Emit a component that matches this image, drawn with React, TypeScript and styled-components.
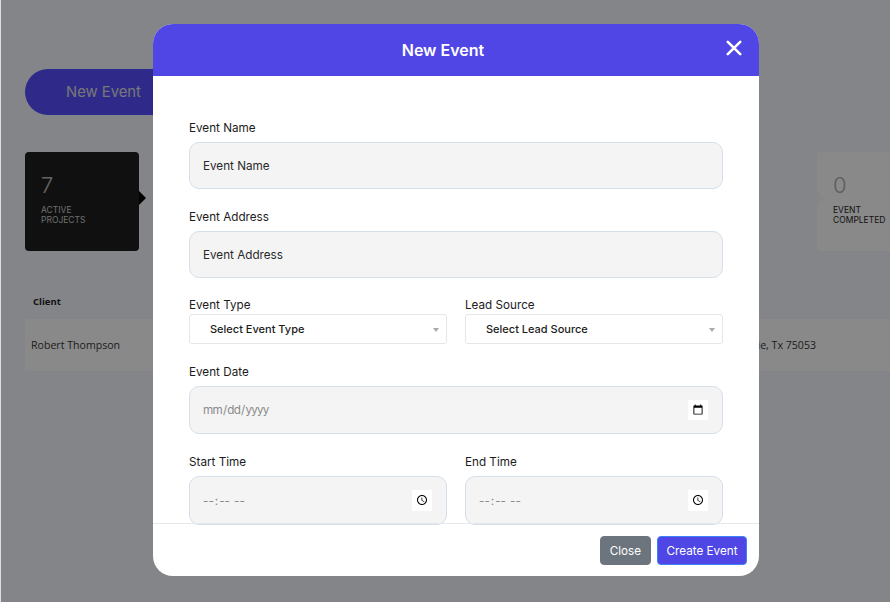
import React from "react";
import styled, { createGlobalStyle } from "styled-components";

const GlobalStyle = createGlobalStyle`
  html, body {
    margin: 0;
    height: 100%;
    overflow: hidden;
    background: #fff;
    font-family: Inter, "Liberation Sans", sans-serif;
  }
  * {
    box-sizing: border-box;
  }
`;

const Page = styled.div`
  width: 890px;
  height: 602px;
  padding: 69px 0 0 25px;
  background: #dcdee3;
  overflow: hidden;
`;

const NewEventButton = styled.button`
  display: block;
  width: 190px;
  height: 46px;
  padding: 0 0 0 41px;
  border: 0;
  border-radius: 23px;
  background: #4f46e5;
  color: #c8c8c8;
  font: 400 14.8px Inter, sans-serif;
  text-align: left;
`;

const CardRow = styled.div`
  display: flex;
  width: 906px;
  margin-top: 37px;
`;

const StatCard = styled.div<{ $dark?: boolean }>`
  position: relative;
  width: 114px;
  height: 99px;
  padding: 21px 15px 0 16px;
  border-radius: 4px;
  background: ${(p) => (p.$dark ? "#1c1c1c" : "#e4e4e4")};
  color: ${(p) => (p.$dark ? "#b8b8b8" : "#222")};
  margin-left: ${(p) => (p.$dark ? "0" : "auto")};
  &::after {
    content: "";
    position: absolute;
    top: 39px;
    border-top: 7px solid transparent;
    border-bottom: 7px solid transparent;
    ${(p) =>
      p.$dark
        ? "left: 100%; border-left: 7px solid #000;"
        : "left: 0; border-left: 7px solid #dedfe3;"}
  }
`;

const StatCount = styled.div<{ $dark?: boolean }>`
  font-size: 22px;
  font-weight: 300;
  line-height: 24px;
  color: ${(p) => (p.$dark ? "#a8a8a8" : "#999")};
`;

const StatLabel = styled.div`
  margin-top: 8px;
  font-size: 8.5px;
  line-height: 10px;
  text-transform: uppercase;
`;

const TableHead = styled.div`
  margin: 45px 0 0 8px;
  font: 700 9.5px "Open Sans", sans-serif;
  line-height: 12px;
  color: #222;
`;

const TableRow = styled.div`
  display: flex;
  justify-content: space-between;
  width: 865px;
  height: 52px;
  margin-top: 11px;
  padding: 18px 74px 0 6px;
  background: #e4e4e4;
  font: 400 10.6px "Open Sans", sans-serif;
  line-height: 16px;
  color: #333;
`;

const Backdrop = styled.div`
  position: fixed;
  inset: 0 0 0 1px;
  background: rgba(0, 0, 0, 0.4);
  padding: 24px 0 0 152px;
`;

const Modal = styled.div`
  width: 606px;
  height: 552px;
  background: #fff;
  border-radius: 20px;
  display: flex;
  flex-direction: column;
`;

const ModalHeader = styled.div`
  display: flex;
  align-items: center;
  justify-content: center;
  position: relative;
  height: 52px;
  flex: none;
  padding-right: 26px;
  background: #4f46e5;
  border-radius: 20px 20px 0 0;
  color: #fff;
  font-size: 16px;
  font-weight: 600;
`;

const CloseIcon = styled.button`
  position: absolute;
  right: 17px;
  top: 16px;
  width: 16px;
  height: 16px;
  padding: 0;
  border: 0;
  background: none;
  display: flex;
  svg {
    display: block;
  }
`;

const ModalBody = styled.div`
  flex: none;
  height: 447px;
  padding: 44px 36px 0;
`;

const Field = styled.div<{ $gap?: number }>`
  margin-bottom: ${(p) => p.$gap ?? 0}px;
`;

const Label = styled.label<{ $space?: number }>`
  display: block;
  height: 16px;
  margin-bottom: ${(p) => p.$space ?? 6}px;
  font-size: 11.7px;
  line-height: 16px;
  color: #1c1c1c;
`;

const TextInput = styled.input<{ $h?: number }>`
  display: block;
  width: 100%;
  height: ${(p) => p.$h ?? 47}px;
  padding: 0 13px;
  background: #f4f4f4;
  border: 1px solid #d5dfea;
  border-radius: 10px;
  outline: none;
  font: 400 11.7px Inter, sans-serif;
  color: #8a8a8a;
  &::placeholder {
    color: #2a2a2a;
    opacity: 1;
  }
  &[type="date"]::-webkit-datetime-edit {
    letter-spacing: -0.8px;
    margin-left: -1px;
  }
  &[type="time"]::-webkit-datetime-edit {
    letter-spacing: -0.2px;
    margin-left: -1px;
  }
  &::-webkit-calendar-picker-indicator {
    background-color: #fff;
    padding: 4px;
    margin-right: 1px;
    opacity: 1;
  }
`;

const TwoCols = styled.div<{ $top?: number }>`
  display: grid;
  grid-template-columns: 258px 258px;
  column-gap: 18px;
  margin-top: ${(p) => p.$top ?? 0}px;
`;

const DateField = styled.div`
  margin-top: 20px;
`;

const SelectBox = styled.div`
  position: relative;
  &::after {
    content: "";
    position: absolute;
    right: 8px;
    top: 14px;
    border-left: 3.5px solid transparent;
    border-right: 3.5px solid transparent;
    border-top: 4px solid #aaa;
  }
`;

const Select = styled.select`
  display: block;
  width: 100%;
  height: 30px;
  padding: 0 0 0 20px;
  appearance: none;
  background: #fff;
  border: 1px solid #e4e6ea;
  border-radius: 3px;
  outline: none;
  font: 500 11px Inter, sans-serif;
  color: #1c1c1c;
`;

const ModalFooter = styled.div`
  flex: none;
  display: flex;
  justify-content: flex-end;
  align-items: flex-start;
  gap: 6px;
  height: 53px;
  padding: 12px 12px 0;
  border-top: 1px solid #e5e7eb;
`;

const FooterButton = styled.button<{ $primary?: boolean }>`
  height: 29px;
  padding: 0 ${(p) => (p.$primary ? 8.5 : 9)}px;
  border: 1px solid ${(p) => (p.$primary ? "#3b82f6" : "#6c757d")};
  border-radius: 4px;
  background: ${(p) => (p.$primary ? "#4f46e5" : "#6c757d")};
  color: #fff;
  font: 400 11.7px Inter, sans-serif;
`;

export default function App() {
  return (
    <>
      <GlobalStyle />
      <Page>
        <NewEventButton>New Event</NewEventButton>
        <CardRow>
          <StatCard $dark>
            <StatCount $dark>7</StatCount>
            <StatLabel>Active<br />Projects</StatLabel>
          </StatCard>
          <StatCard>
            <StatCount>0</StatCount>
            <StatLabel>Event<br />Completed</StatLabel>
          </StatCard>
        </CardRow>
        <TableHead>Client</TableHead>
        <TableRow>
          <span>Robert Thompson</span>
          <span>Grand Prairie, Tx 75053</span>
        </TableRow>
      </Page>
      <Backdrop>
        <Modal>
          <ModalHeader>
            New Event
            <CloseIcon aria-label="Close">
              <svg width="16" height="16" viewBox="0 0 16 16">
                <path d="M1.8 1.8 14.2 14.2M14.2 1.8 1.8 14.2" stroke="#fff" strokeWidth="2.6" strokeLinecap="round" />
              </svg>
            </CloseIcon>
          </ModalHeader>
          <ModalBody>
            <Field $gap={20}>
              <Label>Event Name</Label>
              <TextInput placeholder="Event Name" />
            </Field>
            <Field $gap={19}>
              <Label>Event Address</Label>
              <TextInput placeholder="Event Address" />
            </Field>
            <TwoCols>
              <Field>
                <Label $space={1}>Event Type</Label>
                <SelectBox>
                  <Select>
                    <option>Select Event Type</option>
                  </Select>
                </SelectBox>
              </Field>
              <Field>
                <Label $space={1}>Lead Source</Label>
                <SelectBox>
                  <Select>
                    <option>Select Lead Source</option>
                  </Select>
                </SelectBox>
              </Field>
            </TwoCols>
            <DateField>
              <Label>Event Date</Label>
              <TextInput type="date" $h={48} />
            </DateField>
            <TwoCols $top={20}>
              <Field>
                <Label>Start Time</Label>
                <TextInput type="time" $h={49} />
              </Field>
              <Field>
                <Label>End Time</Label>
                <TextInput type="time" $h={49} />
              </Field>
            </TwoCols>
          </ModalBody>
          <ModalFooter>
            <FooterButton>Close</FooterButton>
            <FooterButton $primary>Create Event</FooterButton>
          </ModalFooter>
        </Modal>
      </Backdrop>
    </>
  );
}
